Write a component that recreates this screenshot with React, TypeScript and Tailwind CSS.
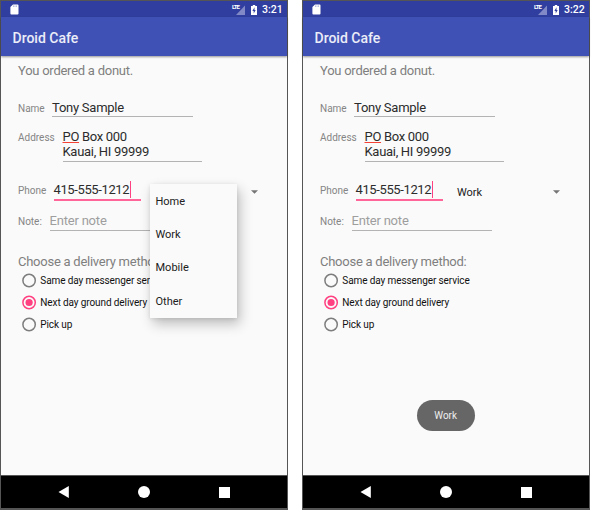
import React from 'react';

type PhoneProps = { time: string; menuOpen?: boolean; selected?: string; toast?: string };

const methods = ['Same day messenger service', 'Next day ground delivery', 'Pick up'];
const phoneTypes = ['Home', 'Work', 'Mobile', 'Other'];

function StatusBar({ time }: { time: string }) {
  return (
    <div className="flex h-4 items-center bg-[#303f9f] pl-[9px] pr-1.5 text-white">
      <svg width="9" height="11" viewBox="0 0 9 11">
        <path fill="#fff" d="M3 0.5h4.6a.9.9 0 0 1 .9.9v8.2a.9.9 0 0 1-.9.9H1.3a.9.9 0 0 1-.9-.9V3.1z" />
        <path stroke="#303f9f" strokeOpacity=".7" strokeWidth=".6" d="M3.5 1.5v1.3M5 1.5v1.3M6.5 1.5v1.3" />
      </svg>
      <div className="ml-auto flex items-center">
        <span className="mb-[5px] w-[7px] text-[6px] font-bold leading-none tracking-[-0.9px]">LTE</span>
        <svg className="-ml-[3px] mt-[2px]" width="9" height="10" viewBox="0 0 9 10">
          <path fill="#8189c6" d="M9 .5V10H0z" />
        </svg>
        <svg className="ml-[6px] mt-px" width="6" height="10" viewBox="0 0 6 10">
          <path fill="#fff" d="M1.8 0h2.4v1H6v9H0V1h1.8z" />
          <path fill="#303f9f" d="M3.5 2.3 1.4 6h1.3v2.6L4.7 5H3.5z" />
        </svg>
        <span className="ml-[5px] w-[19px] pt-[2px] text-[10.5px] font-medium leading-4">{time}</span>
      </div>
    </div>
  );
}

function Label({ className, children }: { className: string; children: React.ReactNode }) {
  return <div className={`text-[10px] leading-4 text-[#858585] ${className}`}>{children}</div>;
}

function Radio({ label, checked }: { label: string; checked: boolean }) {
  return (
    <div className="flex h-[22.2px] items-center pl-[3.5px]">
      <svg width="15" height="15" viewBox="0 0 15 15">
        <circle cx="7.1" cy="7.5" r="6.2" fill="none" stroke={checked ? '#ff4081' : '#7d7d7d'} strokeWidth="1.5" />
        {checked && <circle cx="7.1" cy="7.5" r="3.6" fill="#ff4081" />}
      </svg>
      <span className="ml-[3.8px] whitespace-nowrap text-[10px] tracking-[-0.1px] text-[#111]">{label}</span>
    </div>
  );
}

function Phone({ time, menuOpen, selected, toast }: PhoneProps) {
  return (
    <section className="relative flex h-[510px] w-[288px] shrink-0 flex-col border border-b-2 border-[#555] bg-[#fafafa]">
      <StatusBar time={time} />
      <header className="flex h-[39px] items-center bg-[#3f51b5] pl-[11.5px] pt-[2px] text-[14px] font-medium leading-5 text-white/90 shadow-[0_1px_2px_rgba(0,0,0,0.4)]">
        Droid Cafe
      </header>
      <main className="flex flex-1 flex-col pl-[17px] pt-[5px]">
        <p className="text-[13px] leading-5 tracking-[-0.25px] text-[#7f7f7f]">You ordered a donut.</p>
        <div className="mt-[19px] flex h-[17px] items-baseline">
          <Label className="w-[34px]">Name</Label>
          <div className="w-[140.5px] border-b border-[#b3b3b3] text-[13px] leading-4 tracking-[-0.25px] text-[#2c2c2c]">Tony Sample</div>
        </div>
        <div className="mt-[13px] flex h-8 items-baseline">
          <Label className="w-[44.5px]">Address</Label>
          <div className="w-[139.5px] border-b border-[#b3b3b3] pb-[2px] text-[13px] leading-[14.5px] tracking-[-0.3px] text-[#2c2c2c]">
            <span className="underline decoration-[color:#f44336] decoration-[1px] underline-offset-[1px]">PO</span> Box 000
            <br />
            Kauai, HI 99999
          </div>
        </div>
        <div className="mt-[19px] flex h-[20px] items-baseline">
          <Label className="w-[35.5px]">Phone</Label>
          <div className="flex w-[87.5px] border-b-2 border-[#ff6599] text-[13px] leading-[18px] tracking-[-0.38px] text-[#2c2c2c]">
            415-555-1212
            <span className="mb-px ml-[0.6px] w-px shrink-0 bg-[#ff4081]" />
          </div>
          <div className="ml-[14px] flex w-[102.5px] items-center justify-between text-[11px] leading-4 text-[#212121]">
            <span className="relative top-[2px]">{selected}&nbsp;</span>
            <svg width="7" height="4" viewBox="0 0 7 4" className="relative top-[1px]">
              <path fill="#757575" d="M0 .2h7L3.5 3.7z" />
            </svg>
          </div>
        </div>
        <div className="mt-[11px] flex h-[19px] items-baseline">
          <Label className="w-[31.5px]">Note:</Label>
          <div className="w-[140.5px] border-b border-[#b3b3b3] text-[13px] leading-[18px] tracking-[-0.2px] text-[#9e9e9e]">Enter note</div>
        </div>
        <h2 className="mt-[22px] h-4 whitespace-nowrap text-[13px] leading-[17px] tracking-[-0.25px] text-[#7f7f7f]">Choose a delivery method:</h2>
        {methods.map((m, i) => (
          <Radio key={m} label={m} checked={i === 1} />
        ))}
      </main>
      <nav className="flex h-[33px] items-center justify-between border-t border-[#555] bg-black pl-[57px] pr-[57px]">
        <svg width="11" height="12" viewBox="0 0 11 12"><path fill="#fff" d="M10.8 0v12L.5 6z" /></svg>
        <span className="size-[11.5px] rounded-full bg-white" />
        <span className="size-[11px] bg-white" />
      </nav>
      {menuOpen && (
        <div className="absolute left-[149px] top-[183px] flex h-[133.5px] w-[87px] flex-col bg-[#fafafa] pl-[5.5px] pt-px shadow-[3px_6px_12px_rgba(0,0,0,0.24),0_1px_4px_rgba(0,0,0,0.1)]">
          {phoneTypes.map((t) => (
            <span key={t} className="flex h-[33.3px] shrink-0 items-center text-[11px] leading-4 text-[#212121]">{t}</span>
          ))}
        </div>
      )}
      {toast && (
        <div className="absolute left-[114.3px] top-[399px] flex h-[31px] w-[57.5px] items-center justify-center rounded-full bg-[#666] pt-[2px] text-[11px] text-[#eee]">
          <span className="scale-x-[0.9]">{toast}</span>
        </div>
      )}
    </section>
  );
}

export default function App() {
  return (
    <div className="flex h-[510px] w-[591px] gap-[14px] overflow-hidden bg-white font-['Roboto',sans-serif]">
      <Phone time="3:21" menuOpen />
      <Phone time="3:22" selected="Work" toast="Work" />
    </div>
  );
}
